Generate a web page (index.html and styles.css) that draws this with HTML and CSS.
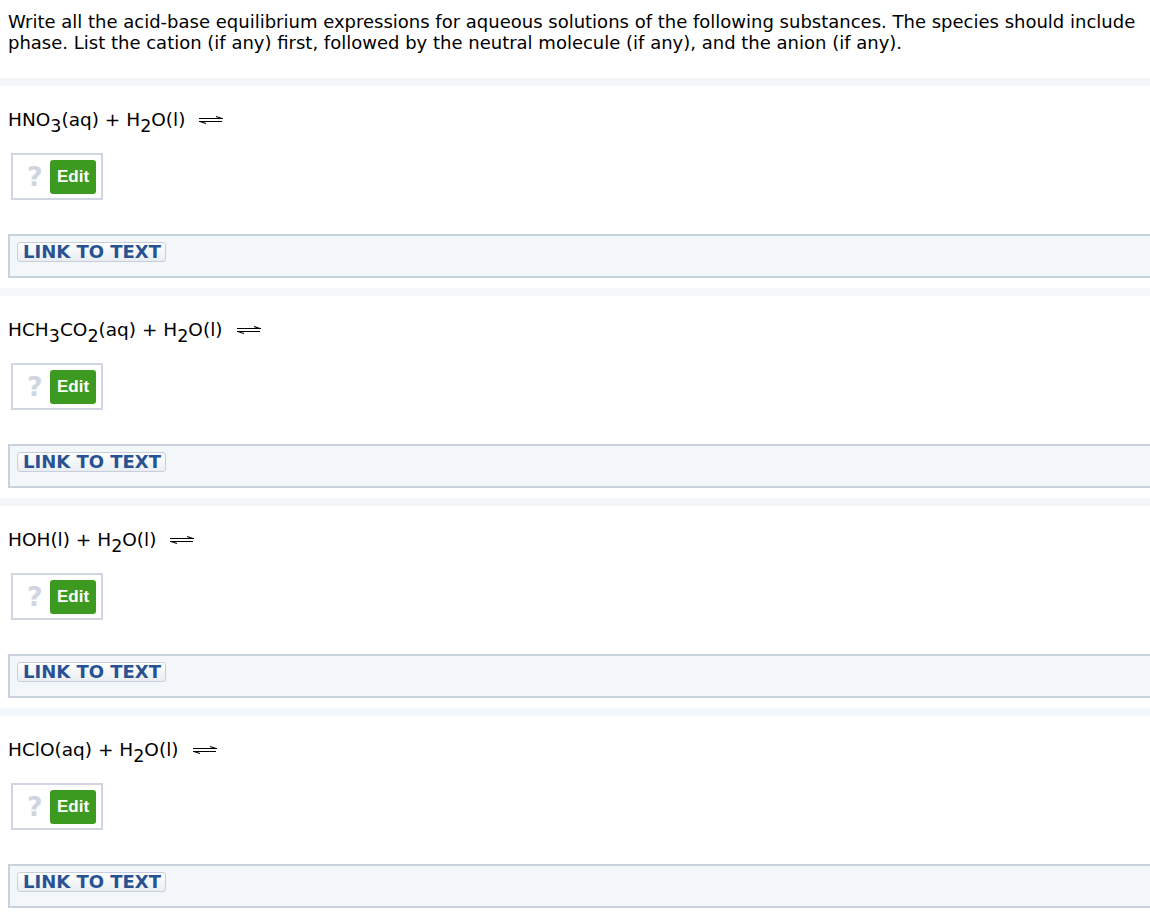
FILE: index.html
```html
<!DOCTYPE html>
<html>
<head>
<meta charset="utf-8">
<link rel="stylesheet" href="styles.css">
</head>
<body>
<div class="page">
  <p class="intro">Write all the acid-base equilibrium expressions for aqueous solutions of the following substances. The species should include phase. List the cation (if any) first, followed by the neutral molecule (if any), and the anion (if any).</p>

  <div class="band"></div>
  <section class="question">
    <div class="eq">HNO<sub>3</sub>(aq) + H<sub>2</sub>O(l)<svg class="arrow" width="26" height="8" viewBox="0 0 26 8"><path d="M1 2.5H25M18 0.6L24 2.5M1 5.5H24M2 5.5L8 7.4" stroke="#000" stroke-width="1.1" fill="none"/></svg></div>
    <div class="editbox"><span class="q">?</span><span class="edit">Edit</span></div>
    <div class="linkbox"><span class="linkbtn">LINK TO TEXT</span></div>
  </section>

  <div class="band"></div>
  <section class="question">
    <div class="eq">HCH<sub>3</sub>CO<sub>2</sub>(aq) + H<sub>2</sub>O(l)<svg class="arrow" width="26" height="8" viewBox="0 0 26 8"><path d="M1 2.5H25M18 0.6L24 2.5M1 5.5H24M2 5.5L8 7.4" stroke="#000" stroke-width="1.1" fill="none"/></svg></div>
    <div class="editbox"><span class="q">?</span><span class="edit">Edit</span></div>
    <div class="linkbox"><span class="linkbtn">LINK TO TEXT</span></div>
  </section>

  <div class="band"></div>
  <section class="question">
    <div class="eq">HOH(l) + H<sub>2</sub>O(l)<svg class="arrow" width="26" height="8" viewBox="0 0 26 8"><path d="M1 2.5H25M18 0.6L24 2.5M1 5.5H24M2 5.5L8 7.4" stroke="#000" stroke-width="1.1" fill="none"/></svg></div>
    <div class="editbox"><span class="q">?</span><span class="edit">Edit</span></div>
    <div class="linkbox"><span class="linkbtn">LINK TO TEXT</span></div>
  </section>

  <div class="band"></div>
  <section class="question">
    <div class="eq">HClO(aq) + H<sub>2</sub>O(l)<svg class="arrow" width="26" height="8" viewBox="0 0 26 8"><path d="M1 2.5H25M18 0.6L24 2.5M1 5.5H24M2 5.5L8 7.4" stroke="#000" stroke-width="1.1" fill="none"/></svg></div>
    <div class="editbox"><span class="q">?</span><span class="edit">Edit</span></div>
    <div class="linkbox"><span class="linkbtn">LINK TO TEXT</span></div>
  </section>
</div>
</body>
</html>
```
FILE: styles.css
```css
html, body {
  margin: 0;
  padding: 0;
  background: #fff;
  overflow: hidden;
}
.page {
  font-family: "DejaVu Sans", Verdana, sans-serif;
  font-size: 16px;
  color: #000;
}
.intro {
  margin: 0;
  padding: 11px 2px 0 8px;
  font-size: 18px;
  line-height: 21px;
  height: 78px;
  box-sizing: border-box;
}
.band {
  height: 8px;
  background: #f4f7fa;
}
.question {
  padding-left: 8px;
  padding-top: 22px;
  padding-bottom: 10px;
}
.eq {
  font-size: 18.5px;
  line-height: 24px;
  height: 24px;
  white-space: nowrap;
}
.eq sub {
  font-size: 17.5px;
  vertical-align: -6px;
  line-height: 0;
}
.arrow {
  margin-left: 13px;
  vertical-align: 2px;
}
.editbox {
  margin-top: 21px;
  margin-left: 3px;
  display: flex;
  align-items: center;
  width: 92px;
  height: 47px;
  box-sizing: border-box;
  border: 2px solid #cfd6e1;
  padding: 5px 5px 4px 14px;
}
.q {
  font-family: "DejaVu Sans", Verdana, sans-serif;
  font-weight: bold;
  font-size: 27px;
  line-height: 30px;
  color: #d0d6e0;
  width: 23px;
}
.edit {
  display: flex;
  align-items: center;
  justify-content: center;
  width: 46px;
  height: 34px;
  background: #3b9a1f;
  border-radius: 3px;
  color: #fff;
  font-family: "Liberation Sans", Arial, sans-serif;
  font-weight: bold;
  font-size: 17px;
}
.linkbox {
  margin-top: 34px;
  height: 44px;
  box-sizing: border-box;
  border: 2px solid #c9d1dd;
  border-right: none;
  background: #f4f7fa;
  padding: 6px 0 0 7px;
}
.linkbtn {
  display: inline-block;
  height: 20px;
  box-sizing: border-box;
  padding: 0 4px 0 5px;
  border: 1px solid #c7cfda;
  border-radius: 3px;
  background: linear-gradient(#ffffff, #e9edf2);
  color: #285291;
  font-weight: bold;
  font-size: 18px;
  line-height: 18px;
}
```
